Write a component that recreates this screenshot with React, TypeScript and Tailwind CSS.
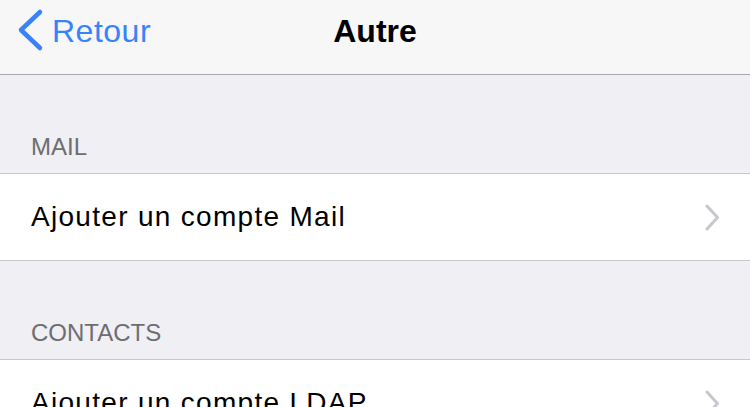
import React from 'react';

function Disclosure() {
  return (
    <svg width="16" height="27" viewBox="0 0 16 27" fill="none" className="shrink-0">
      <path d="M3 2 L13.5 13.5 L3 25" stroke="#c7c7cc" strokeWidth="3" strokeLinecap="round" strokeLinejoin="round" />
    </svg>
  );
}

function SectionHeader({ label }: { label: string }) {
  return (
    <div className="h-[99px] flex items-end pl-[31px] pb-[14px] border-b border-[#c8c7cc]">
      <span className="text-[24px] leading-[24px] text-[#6d6d72]">{label}</span>
    </div>
  );
}

function Row({ label }: { label: string }) {
  return (
    <div className="h-[87px] bg-white flex items-center justify-between pl-[31px] pr-[30px] border-b border-[#c8c7cc]">
      <span className="text-[28px] leading-[32px] tracking-[1.3px] text-black">{label}</span>
      <Disclosure />
    </div>
  );
}

export default function App() {
  return (
    <div
      className="w-[750px] h-[407px] overflow-hidden bg-[#efeff4]"
      style={{ fontFamily: '"Liberation Sans", Arial, sans-serif' }}
    >
      {/* Nav bar */}
      <header className="h-[75px] bg-[#f7f7f8] border-b border-[#a9a9ac] grid grid-cols-3 items-start">
        <div className="flex items-start pl-[16px] gap-[8px]">
          <svg width="28" height="44" viewBox="0 0 28 44" fill="none" className="mt-[8px] shrink-0">
            <path d="M24 4 L5 22 L24 40" stroke="#3a82f7" strokeWidth="4.5" strokeLinecap="round" strokeLinejoin="round" />
          </svg>
          <span className="mt-[15px] text-[32px] leading-[32px] tracking-[0.5px] text-[#3a82f7]">Retour</span>
        </div>
        <div className="flex justify-center">
          <h1 className="mt-[15px] text-[32px] leading-[32px] font-bold text-black">Autre</h1>
        </div>
        <div />
      </header>

      <SectionHeader label="MAIL" />
      <Row label="Ajouter un compte Mail" />

      <SectionHeader label="CONTACTS" />
      <Row label="Ajouter un compte LDAP" />
    </div>
  );
}
